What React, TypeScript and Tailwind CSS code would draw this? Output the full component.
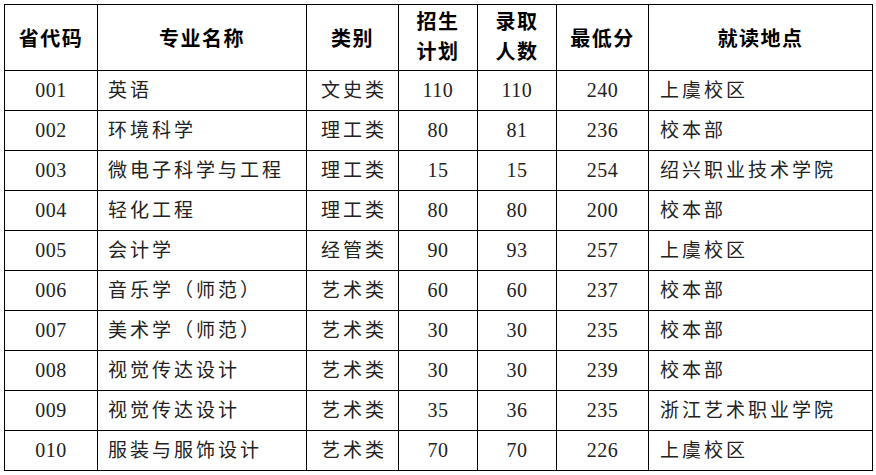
const rows = [
  ["001", "英语", "文史类", "110", "110", "240", "上虞校区"],
  ["002", "环境科学", "理工类", "80", "81", "236", "校本部"],
  ["003", "微电子科学与工程", "理工类", "15", "15", "254", "绍兴职业技术学院"],
  ["004", "轻化工程", "理工类", "80", "80", "200", "校本部"],
  ["005", "会计学", "经管类", "90", "93", "257", "上虞校区"],
  ["006", "音乐学（师范）", "艺术类", "60", "60", "237", "校本部"],
  ["007", "美术学（师范）", "艺术类", "30", "30", "235", "校本部"],
  ["008", "视觉传达设计", "艺术类", "30", "30", "239", "校本部"],
  ["009", "视觉传达设计", "艺术类", "35", "36", "235", "浙江艺术职业学院"],
  ["010", "服装与服饰设计", "艺术类", "70", "70", "226", "上虞校区"],
]

export default function App() {
  return (
    <div className="bg-white w-[876px] h-[475px] pt-[4px] pl-[4px] font-['Liberation_Serif','Noto_Sans_CJK_SC',serif] text-[#222]">
      <table className="table-fixed border-collapse w-[868px]">
        <colgroup>
          <col className="w-[93px]" />
          <col className="w-[209px]" />
          <col className="w-[92px]" />
          <col className="w-[79px]" />
          <col className="w-[79px]" />
          <col className="w-[92px]" />
          <col className="w-[224px]" />
        </colgroup>
        <thead>
          <tr className="h-[66px] font-['Noto_Sans_CJK_SC',serif] text-[20px] text-black tracking-[1.5px] leading-[30px]">
            <th className="border border-black p-0 font-bold">省代码</th>
            <th className="border border-black p-0 font-bold">专业名称</th>
            <th className="border border-black p-0 font-bold">类别</th>
            <th className="border border-black p-0 pb-[4px] font-bold">招生<br />计划</th>
            <th className="border border-black p-0 pb-[4px] font-bold">录取<br />人数</th>
            <th className="border border-black p-0 font-bold">最低分</th>
            <th className="border border-black p-0 font-bold">就读地点</th>
          </tr>
        </thead>
        <tbody>
          {rows.map((r) => (
            <tr key={r[0]} className="h-[40px] text-[19px] leading-[22px]">
              <td className="border border-black p-0 pb-[2px] text-center tracking-[0.5px] text-[20px]">{r[0]}</td>
              <td className="border border-black p-0 pl-[10px] tracking-[3px]">{r[1]}</td>
              <td className="border border-black p-0 pl-[3px] text-center tracking-[3px]">{r[2]}</td>
              <td className="border border-black p-0 pb-[2px] text-center tracking-[0.5px] text-[20px]">{r[3]}</td>
              <td className="border border-black p-0 pb-[2px] text-center tracking-[0.5px] text-[20px]">{r[4]}</td>
              <td className="border border-black p-0 pb-[2px] text-center tracking-[0.5px] text-[20px]">{r[5]}</td>
              <td className="border border-black p-0 pl-[11px] tracking-[3px]">{r[6]}</td>
            </tr>
          ))}
        </tbody>
      </table>
    </div>
  )
}
